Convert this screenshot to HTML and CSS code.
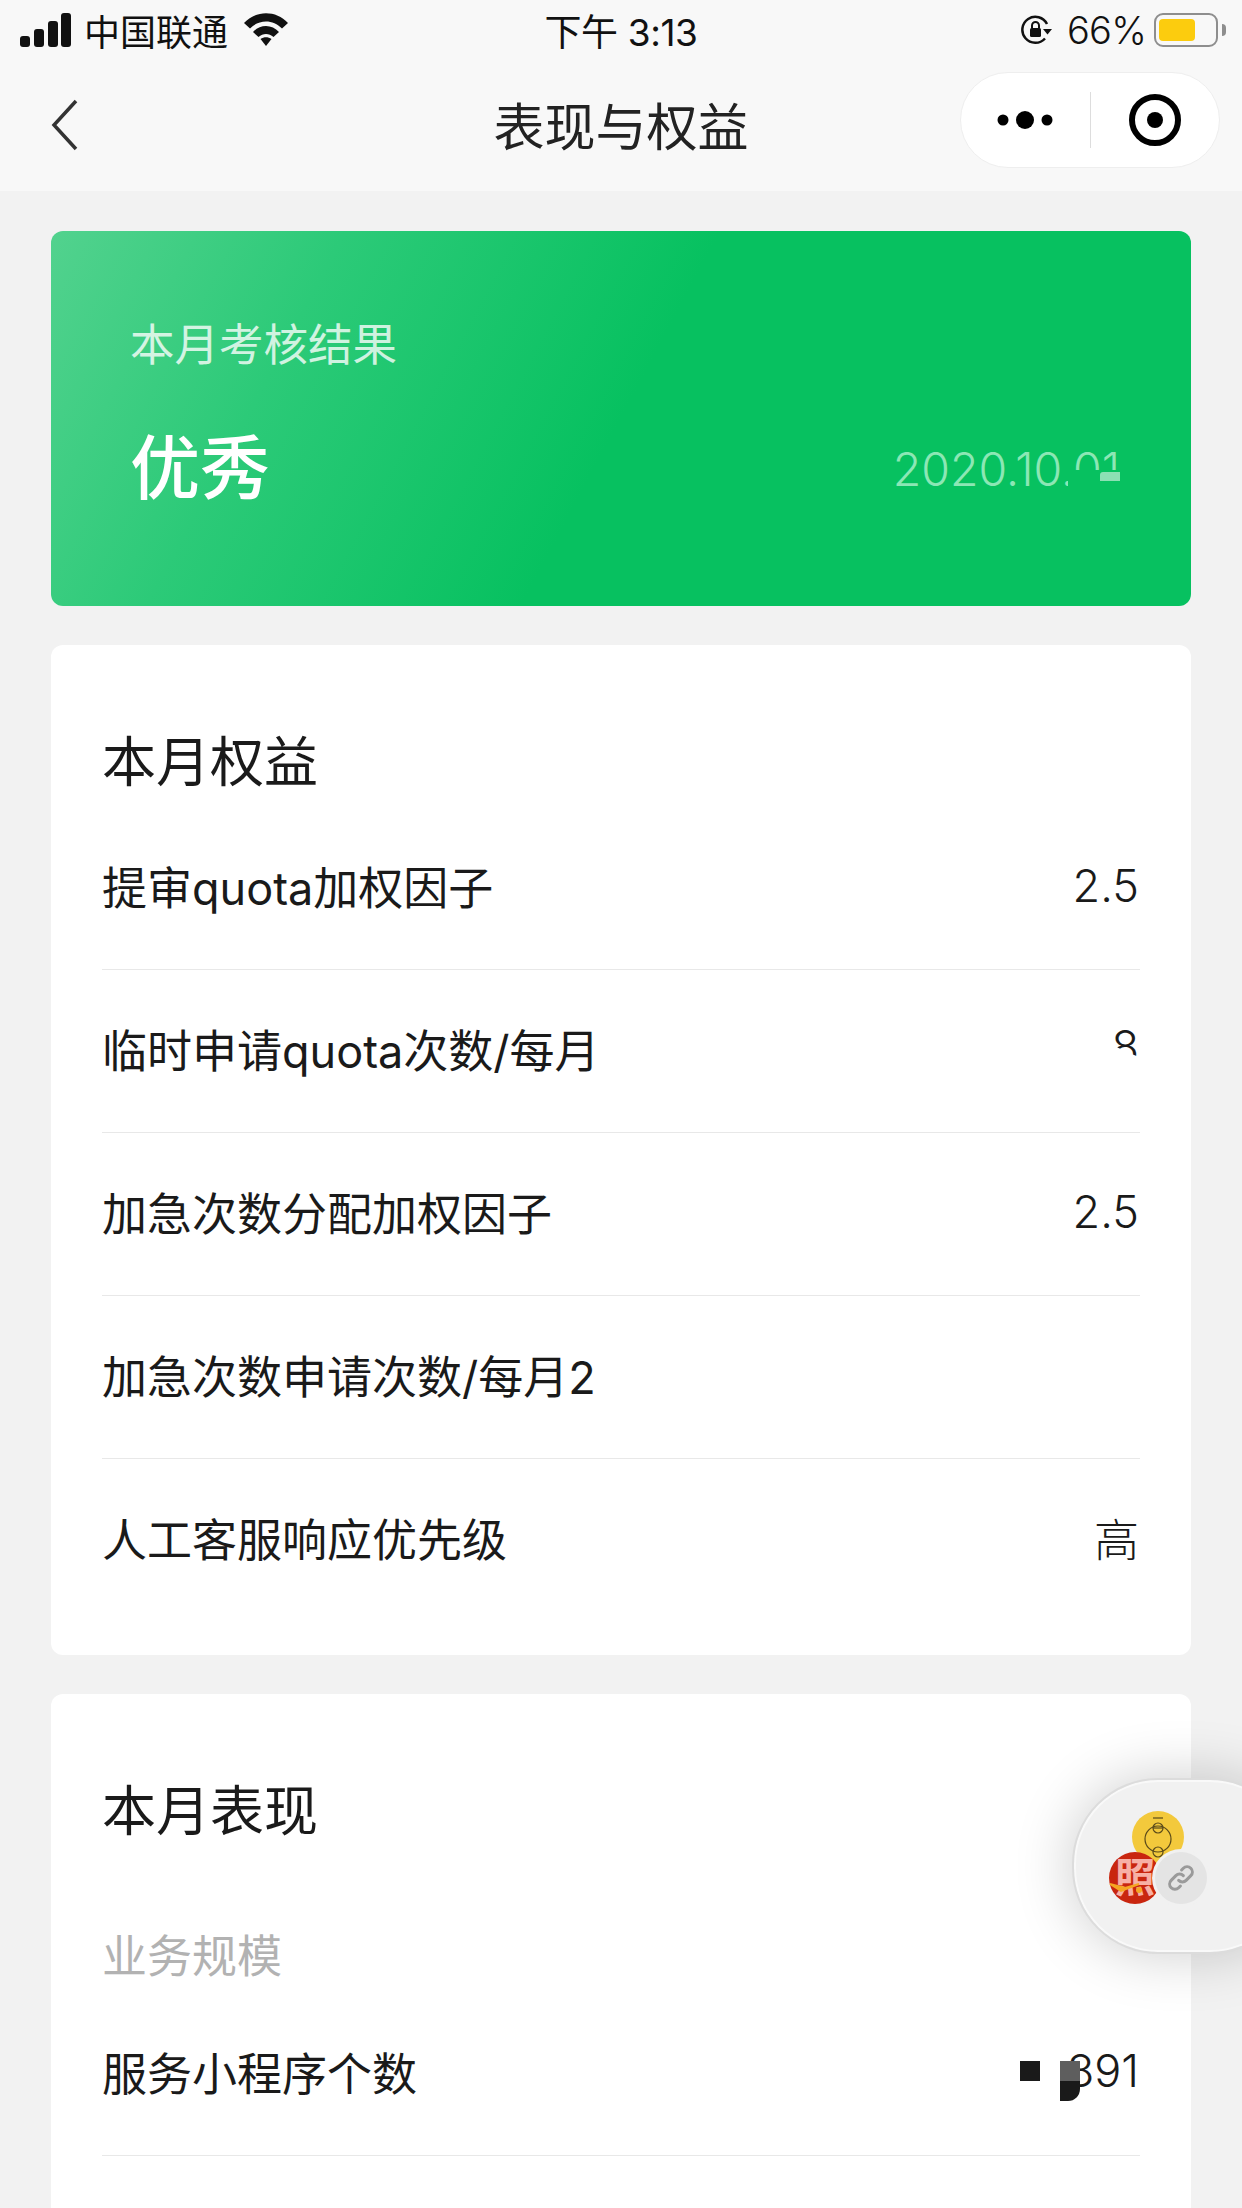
FILE: index.html
```html
<!DOCTYPE html>
<html lang="zh-CN">
<head>
    <meta charset="UTF-8">
    <meta name="viewport" content="width=device-width, initial-scale=1.0">
    <title>表现与权益</title>
    <link rel="stylesheet" href="styles.css">
</head>
<body>
    <div class="page">
        <header class="header">
            <div class="status-bar">
                <div class="status-left">
                    <svg class="signal" width="51" height="34" viewBox="0 0 51 34">
                        <rect x="0" y="23" width="10" height="11" rx="3"/>
                        <rect x="14" y="16" width="10" height="18" rx="3"/>
                        <rect x="28" y="8" width="10" height="26" rx="3"/>
                        <rect x="41" y="0" width="10" height="34" rx="3"/>
                    </svg>
                    <span class="carrier">中国联通</span>
                    <svg class="wifi" width="46" height="34" viewBox="0 0 46 34">
                        <path d="M1 10 C13 -3 33 -3 45 10 L39 15.500 C30 6 16 6 7 15.500 Z"/>
                        <path d="M10 19 C17 11 29 11 36 19 L30.500 24 C26 20 20 20 15.500 24 Z"/>
                        <path d="M17.500 26 C21 23.500 25 23.500 28.500 26 L23 33 Z"/>
                    </svg>
                </div>
                <div class="status-time">下午 3:13</div>
                <div class="status-right">
                    <svg class="rotate-lock" width="32" height="30" viewBox="0 0 32 30">
                        <path d="M25 23.500 A13 13 0 1 1 27 9" fill="none" stroke="#111" stroke-width="2.500"/>
                        <path d="M23 14 L32 14 L27.500 19.500 Z" fill="#111"/>
                        <rect x="10" y="13" width="11" height="9" rx="1.500" fill="#111"/>
                        <path d="M12 13 V10.500 A3.500 3.500 0 0 1 19 10.500 V13" fill="none" stroke="#111" stroke-width="2"/>
                    </svg>
                    <span class="battery-num">66%</span>
                    <div class="battery"><div class="battery-fill"></div></div>
                    <div class="battery-nub"></div>
                </div>
            </div>
            <div class="nav-bar">
                <div class="nav-left">
                    <svg class="back" width="28" height="52" viewBox="0 0 28 52">
                        <path d="M25 2 L3 26 L25 50" fill="none" stroke="#333" stroke-width="3.500"/>
                    </svg>
                </div>
                <div class="nav-title">表现与权益</div>
                <div class="nav-right">
                    <div class="capsule">
                        <div class="capsule-btn">
                            <svg width="56" height="20" viewBox="0 0 56 20">
                                <circle cx="6" cy="10" r="5.500"/>
                                <circle cx="28" cy="10" r="9"/>
                                <circle cx="50" cy="10" r="5.500"/>
                            </svg>
                        </div>
                        <div class="capsule-line"></div>
                        <div class="capsule-btn">
                            <svg width="52" height="52" viewBox="0 0 52 52">
                                <circle cx="26" cy="26" r="23" fill="none" stroke="#000" stroke-width="6"/>
                                <circle cx="26" cy="26" r="8"/>
                            </svg>
                        </div>
                    </div>
                </div>
            </div>
        </header>

        <main class="content">
            <section class="result-card">
                <div class="result-label">本月考核结果</div>
                <div class="result-main">
                    <span class="result-level">优秀</span>
                    <span class="result-date">2020.10.01<i class="date-mask"></i><i class="date-patch"></i></span>
                </div>
            </section>

            <section class="card">
                <h2 class="card-title">本月权益</h2>
                <div class="row"><span>提审quota加权因子</span><span class="value">2.5</span></div>
                <div class="row"><span>临时申请quota次数/每月</span><span class="value value-cut">8</span></div>
                <div class="row"><span>加急次数分配加权因子</span><span class="value">2.5</span></div>
                <div class="row"><span>加急次数申请次数/每月2</span></div>
                <div class="row"><span>人工客服响应优先级</span><span class="value">高</span></div>
            </section>

            <section class="card">
                <h2 class="card-title">本月表现</h2>
                <div class="card-sub">业务规模</div>
                <div class="row">
                    <span>服务小程序个数</span>
                    <span class="value value-masked">891<i class="mask mask-a"></i><i class="mask mask-b"></i><i class="mask mask-c"></i></span>
                </div>
                <div class="row"><span></span></div>
            </section>
        </main>

        <div class="float-ball">
            <div class="ball-icon ball-yellow">
                <svg width="52" height="52" viewBox="0 0 52 52" fill="none" stroke="#5a4a1a" stroke-width="1.200">
                    <circle cx="26" cy="28" r="13"/>
                    <ellipse cx="26" cy="17" rx="5" ry="5"/>
                    <ellipse cx="26" cy="41" rx="5" ry="5"/>
                    <path d="M21 7 H31"/>
                    <path d="M21 17 H31"/>
                </svg>
            </div>
            <div class="ball-icon ball-red"><span class="ball-red-text">照</span>
                <svg class="ball-check" width="52" height="52" viewBox="0 0 52 52">
                    <path d="M1 32 L12 39 L30 32 L16 36 Z" fill="#f5a623" stroke="#f5a623" stroke-width="2"/>
                    <circle cx="30" cy="38" r="3" fill="#f5a623"/>
                </svg>
            </div>
            <div class="ball-icon ball-link">
                <svg width="28" height="28" viewBox="0 0 24 24" fill="none" stroke="#9a9a9a" stroke-width="2.600" stroke-linecap="round">
                    <path d="M10 14 a4.500 4.500 0 0 0 6.400 0 l4 -4 a4.500 4.500 0 0 0 -6.400 -6.400 l-1.500 1.500"/>
                    <path d="M14 10 a4.500 4.500 0 0 0 -6.400 0 l-4 4 a4.500 4.500 0 0 0 6.400 6.400 l1.500 -1.500"/>
                </svg>
            </div>
        </div>
    </div>
</body>
</html>
```

FILE: styles.css
```css
body, html {
    margin: 0;
    padding: 0;
    background: #f2f2f2;
    font-family: Inter, 'Noto Sans CJK SC', sans-serif;
}
.page {
    position: relative;
    width: 1242px;
    height: 2208px;
    overflow: hidden;
    color: #1a1a1a;
}
/* 顶部状态栏和导航 */
.header {
    height: 191px;
    background: #f8f8f8;
}
.status-bar {
    display: grid;
    grid-template-columns: 1fr auto 1fr;
    align-items: center;
    height: 60px;
    padding: 0 16px;
    color: #111;
}
.status-left {
    display: flex;
    align-items: center;
    padding-left: 4px;
}
.signal, .wifi {
    fill: #111;
}
.carrier {
    margin-left: 13px;
    font-size: 36px;
}
.wifi {
    margin-left: 15px;
}
.status-time {
    font-size: 37px;
    letter-spacing: -0.01em;
}
.status-right {
    display: flex;
    align-items: center;
    justify-content: flex-end;
}
.battery-num {
    margin-left: 15px;
    margin-right: 8px;
    font-size: 38px;
    font-weight: 300;
    letter-spacing: -0.02em;
}
.battery {
    box-sizing: border-box;
    width: 64px;
    height: 34px;
    padding: 4px 3px;
    border: 2px solid #8e8e8e;
    border-radius: 9px;
}
.battery-fill {
    width: 36px;
    height: 100%;
    background: #fccc0e;
    border-radius: 4px;
}
.battery-nub {
    width: 4px;
    height: 12px;
    margin-left: 4px;
    background: #8e8e8e;
    border-radius: 0 4px 4px 0;
}
.nav-bar {
    display: grid;
    grid-template-columns: 1fr auto 1fr;
    align-items: center;
    height: 120px;
    padding: 0 22px;
}
.nav-left {
    display: flex;
    padding-top: 10px;
    padding-left: 29px;
}
.nav-title {
    padding-top: 8px;
    font-size: 51px;
    color: #222;
}
.nav-right {
    display: flex;
    justify-content: flex-end;
}
.capsule {
    box-sizing: border-box;
    display: flex;
    align-items: center;
    width: 260px;
    height: 96px;
    background: #fff;
    border: 1.500px solid #eee;
    border-radius: 48px;
}
.capsule-btn {
    display: flex;
    flex: 1 1 0;
    justify-content: center;
}
.capsule-line {
    width: 1px;
    height: 56px;
    background: #ddd;
}
/* 内容区 */
.content {
    display: flex;
    flex-direction: column;
    gap: 39px;
    padding: 40px 51px 0 51px;
}
.result-card {
    box-sizing: border-box;
    height: 375px;
    padding: 84px 71px 0 79px;
    background: linear-gradient(118deg, #52d28e 0%, #2cca78 22%, #07c160 50%);
    border-radius: 12px;
    color: #fff;
}
.result-label {
    font-size: 44.500px;
    line-height: 60px;
    opacity: 0.78;
}
.result-main {
    display: flex;
    align-items: center;
    justify-content: space-between;
    margin-top: 52px;
}
.result-level {
    font-size: 70px;
    font-weight: 500;
    line-height: 84px;
}
.result-date {
    position: relative;
    font-size: 46.500px;
    font-weight: 300;
    color: #8ce7b5;
}
.date-mask {
    position: absolute;
    right: 0;
    top: 29px;
    width: 52px;
    height: 28px;
    background: #07c160;
}
.date-patch {
    position: absolute;
    right: 0;
    top: 31px;
    width: 20px;
    height: 9px;
    background: #8ce0b4;
    border-radius: 3px 0 0 0;
}
.card {
    padding: 0 51px 33px 51px;
    background: #fff;
    border-radius: 12px;
}
.card-title {
    margin: 0;
    padding: 80px 0 6px 0;
    font-size: 54px;
    font-weight: 400;
    line-height: 76px;
}
.card-sub {
    padding-top: 65px;
    font-size: 45px;
    line-height: 72px;
    color: #b2b2b2;
}
.row {
    box-sizing: border-box;
    display: flex;
    align-items: center;
    justify-content: space-between;
    height: 163px;
    padding-bottom: 6px;
    font-size: 45px;
    font-weight: 400;
    border-bottom: 1px solid #e8e8e8;
}
.row:last-child {
    border-bottom: none;
}
.value {
    margin-right: 1px;
    font-weight: 300;
}
.value-cut {
    position: relative;
    margin-top: -2px;
    line-height: 60px;
}
/* 遮住数字下半部分 */
.value-cut::after {
    content: "";
    position: absolute;
    left: -4px;
    right: -4px;
    top: 26px;
    height: 34px;
    background: #fff;
    clip-path: polygon(0 0, 75% 12px, 100% 16px, 100% 100%, 0 100%);
}
.value-masked {
    position: relative;
    line-height: 60px;
}
.mask {
    position: absolute;
    width: 20px;
    height: 20px;
}
.mask-a {
    right: 99px;
    top: 20px;
    background: #1a1a1a;
}
.mask-b {
    right: 59px;
    top: 20px;
    background: #5e5e5e;
}
.mask-c {
    right: 59px;
    top: 40px;
    background: #1a1a1a;
    border-radius: 0 0 12px 0;
}
/* 右侧悬浮窗 */
.float-ball {
    position: absolute;
    left: 1072px;
    top: 1778px;
    width: 220px;
    height: 172px;
    background: #f1f1f1;
    border: 2px solid #dcdcdc;
    border-radius: 86px;
    box-shadow: 0 0 60px rgba(0, 0, 0, 0.2), inset 0 0 0 2px #f9f9f9;
}
.ball-icon {
    position: absolute;
    display: flex;
    align-items: center;
    justify-content: center;
    width: 52px;
    height: 52px;
    border-radius: 50%;
}
.ball-yellow {
    left: 58px;
    top: 31px;
    background: #f3c93c;
}
.ball-red {
    left: 35px;
    top: 72px;
    background: #c9260f;
}
.ball-red-text {
    font-size: 40px;
    font-weight: 700;
    line-height: 1;
    color: #f7b0a5;
}
.ball-check {
    position: absolute;
    left: 0;
    top: 0;
}
.ball-link {
    left: 81px;
    top: 72px;
    background: #e4e4e4;
    box-shadow: 0 0 0 3px #f1f1f1;
}
```
